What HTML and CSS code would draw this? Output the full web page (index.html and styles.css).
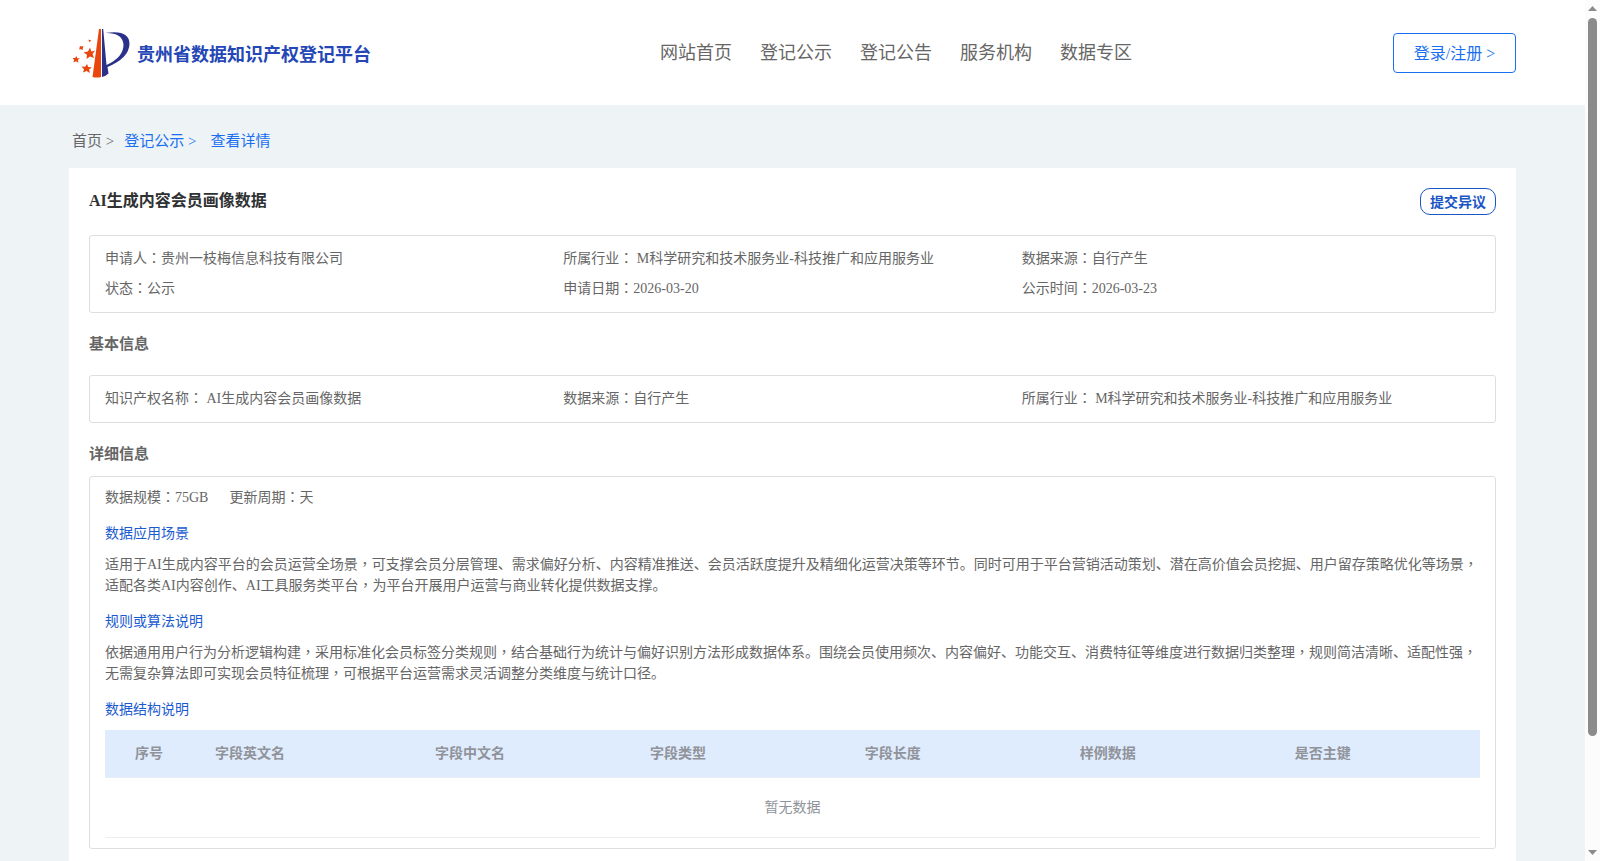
FILE: index.html
```html
<!DOCTYPE html>
<html>
<head>
<meta charset="utf-8">
<title>贵州省数据知识产权登记平台</title>
<link rel="stylesheet" href="styles.css">
</head>
<body>
<header class="header">
  <a class="brand" href="#">
    <svg class="brand-mark" viewBox="0 0 60 52" aria-hidden="true">
      <path fill="#e8450f" d="M27 2 L29 2 L29 50 Q25 51 20.500 50 Z"/>
      <path fill="#2b3188" d="M30 2 L31.200 2 L34.500 38 Q52 30 51.500 17 Q50 5.500 33 6 Q57.500 2 57.500 17 Q57 31 35.500 40 L36.500 46.500 Q34 49 30 50 Z"/>
      <g fill="#e8450f">
        <path d="M18 20.500 L19.300 24.500 L23 23.800 L20.500 27 L22 31 L18 29.500 L14.500 32 L15 27.800 L11.500 25.500 L16 24.600 Z"/>
        <path d="M15 37 L16.200 40 L20 40.500 L17 42.500 L18 46 L14.500 44 L11 45.500 L12 42.200 L9.500 39.600 L13.200 39.800 Z"/>
        <path d="M4.500 29 L5.200 31.200 L8 31.500 L5.800 33 L6.500 35.700 L3.800 34.200 L1.500 35.500 L2.100 32.800 L0.500 31 L3.100 31 Z"/>
        <path d="M8 19 L9.500 19.500 L11.500 19 L10.800 21 L10.800 23 L9.100 22.200 L7.300 22.500 L7.500 20.800 Z"/>
        <path d="M16.500 12.500 L17.700 13 L19 13 L18.300 14.500 L17 15 Z"/>
      </g>
    </svg>
    <span>贵州省数据知识产权登记平台</span>
  </a>
  <nav class="nav">
    <a href="#">网站首页</a>
    <a href="#">登记公示</a>
    <a href="#">登记公告</a>
    <a href="#">服务机构</a>
    <a href="#">数据专区</a>
  </nav>
  <div class="account"><button class="login" type="button">登录/注册 &gt;</button></div>
</header>

<main class="main">
  <nav class="crumbs">
    <a class="crumb-home" href="#">首页 &gt;</a>
    <a class="crumb-list" href="#">登记公示 &gt;</a>
    <a href="#">查看详情</a>
  </nav>

  <article class="card">
    <div class="card-head">
      <h1>AI生成内容会员画像数据</h1>
      <button class="objection" type="button">提交异议</button>
    </div>

    <div class="box facts">
      <div>申请人<span class="mid">：</span>贵州一枝梅信息科技有限公司</div>
      <div>所属行业<span class="mid">：</span> M科学研究和技术服务业-科技推广和应用服务业</div>
      <div>数据来源<span class="mid">：</span>自行产生</div>
      <div>状态<span class="mid">：</span>公示</div>
      <div>申请日期<span class="mid">：</span>2026-03-20</div>
      <div>公示时间<span class="mid">：</span>2026-03-23</div>
    </div>

    <h2 class="section-basic">基本信息</h2>
    <div class="box facts">
      <div>知识产权名称<span class="mid">：</span> AI生成内容会员画像数据</div>
      <div>数据来源<span class="mid">：</span>自行产生</div>
      <div>所属行业<span class="mid">：</span> M科学研究和技术服务业-科技推广和应用服务业</div>
    </div>

    <h2 class="section-detail">详细信息</h2>
    <div class="box detail">
      <div class="scale"><span>数据规模<span class="mid">：</span>75GB</span><span>更新周期<span class="mid">：</span>天</span></div>
      <h3>数据应用场景</h3>
      <p>适用于AI生成内容平台的会员运营全场景<span class="mid">，</span>可支撑会员分层管理、需求偏好分析、内容精准推送、会员活跃度提升及精细化运营决策等环节。同时可用于平台营销活动策划、潜在高价值会员挖掘、用户留存策略优化等场景<span class="mid">，</span>适配各类AI内容创作、AI工具服务类平台<span class="mid">，</span>为平台开展用户运营与商业转化提供数据支撑。</p>
      <h3>规则或算法说明</h3>
      <p>依据通用用户行为分析逻辑构建<span class="mid">，</span>采用标准化会员标签分类规则<span class="mid">，</span>结合基础行为统计与偏好识别方法形成数据体系。围绕会员使用频次、内容偏好、功能交互、消费特征等维度进行数据归类整理<span class="mid">，</span>规则简洁清晰、适配性强<span class="mid">，</span>无需复杂算法即可实现会员特征梳理<span class="mid">，</span>可根据平台运营需求灵活调整分类维度与统计口径。</p>
      <h3>数据结构说明</h3>
      <table class="fields">
        <colgroup><col class="col-index"><col class="col-name"><col><col><col><col><col class="col-key"></colgroup>
        <thead>
          <tr><th class="index">序号</th><th>字段英文名</th><th>字段中文名</th><th>字段类型</th><th>字段长度</th><th>样例数据</th><th>是否主键</th></tr>
        </thead>
        <tbody><tr><td colspan="7">暂无数据</td></tr></tbody>
      </table>
    </div>
  </article>
</main>

<div class="scrollbar" aria-hidden="true">
  <svg class="arrow" viewBox="0 0 9 5"><path d="M0 5 L4.500 0 L9 5 Z"/></svg>
  <div class="track"><div class="thumb"></div></div>
  <svg class="arrow" viewBox="0 0 9 5"><path d="M0 0 L9 0 L4.500 5 Z"/></svg>
</div>
</body>
</html>
```

FILE: styles.css
```css
* { box-sizing: border-box; }

html { scrollbar-width: none; }

body {
  margin: 0;
  padding-right: 15px;
  min-height: 100vh;
  background: #eef3f6;
  color: #666;
  font-family: "Liberation Serif", "Noto Sans CJK SC", serif;
  font-size: 14px;
}

a { color: inherit; text-decoration: none; }
button { font-family: inherit; background: #fff; padding: 0 0 2px; cursor: pointer; }
h1, h2, h3, p { margin: 0; }

/* Colons and commas centred in their cell */
.mid { font-family: "Noto Sans CJK TC", sans-serif; line-height: 1; }

.header {
  display: grid;
  grid-template-columns: 20fr auto 13fr;
  align-items: center;
  height: 105px;
  padding: 0 69px;
  background: #fff;
}

.brand {
  display: flex;
  align-items: center;
  gap: 5px;
  padding-left: 3px;
  color: #2447b5;
  font-size: 18px;
  font-weight: bold;
}

.brand-mark { width: 60px; height: 52px; }

.nav { display: flex; gap: 28px; padding-bottom: 4px; font-size: 18px; }

.account { display: flex; justify-content: flex-end; }

.login {
  width: 123px;
  height: 40px;
  border: 1px solid #1a6ff0;
  border-radius: 4px;
  color: #1a6ff0;
  font-size: 16px;
}

.main { padding: 0 69px; }

.crumbs {
  display: flex;
  align-items: center;
  height: 63px;
  padding: 6px 3px 0;
  color: #1a6ff0;
  font-size: 15px;
}

.crumb-home { color: #666; margin-right: 10px; }
.crumb-list { margin-right: 14px; }

.card { padding: 20px 20px 40px; background: #fff; }

.card-head {
  display: flex;
  justify-content: space-between;
  align-items: flex-start;
  height: 47px;
}

h1 { color: #303133; font-size: 16px; line-height: 26px; }

.objection {
  width: 76px;
  height: 27px;
  border: 1px solid #1a56c4;
  border-radius: 10px;
  color: #1a56c4;
  font-size: 14px;
  font-weight: bold;
}

.box { border: 1px solid #dcdfe0; border-radius: 3px; }

.facts {
  display: grid;
  grid-template-columns: repeat(3, 1fr);
  padding: 8px 15px;
  line-height: 30px;
}

h2 { font-size: 15px; line-height: 20px; }
.section-basic { padding: 21px 0; }
.section-detail { padding: 21px 0 12px; }

.detail { padding: 10px 15px 10px; line-height: 21px; }
.scale { display: flex; gap: 21px; }

h3 {
  margin: 15px 0 10px;
  color: #1a5bd0;
  font-size: 14px;
  font-weight: normal;
  line-height: 21px;
}

.fields {
  width: 100%;
  border-collapse: separate;
  border-spacing: 0;
  table-layout: fixed;
  color: #909399;
}

.col-index { width: 7.270%; }
.col-name { width: 16%; }
.col-key { width: 14.200%; }

th {
  height: 48px;
  padding: 0 10px;
  border-bottom: 1px solid #ebeef5;
  background: #dfecfe;
  text-align: left;
}

th.index { padding-left: 30px; }

td {
  height: 60px;
  padding: 0;
  border-bottom: 1px solid #ebeef0;
  text-align: center;
}

.scrollbar {
  position: fixed;
  top: 0;
  right: 0;
  bottom: 0;
  width: 15px;
  display: flex;
  flex-direction: column;
  align-items: center;
  padding: 6px 0;
  background: #fcfcfc;
}

.arrow { width: 9px; height: 5px; fill: #8b8b8b; }
.track { flex: 1; padding: 7px 0; }
.thumb { width: 9px; height: 87%; border-radius: 5px; background: #8b8b8b; }
```
